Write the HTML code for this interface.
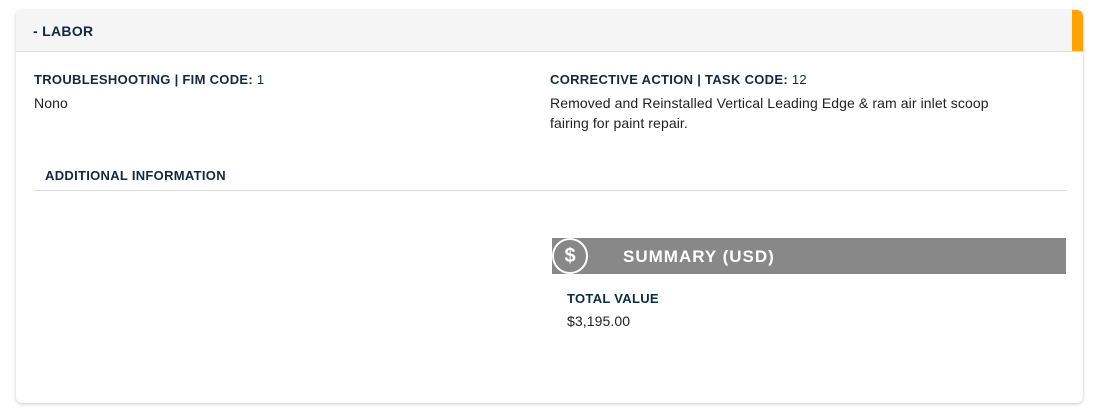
<!DOCTYPE html>
<html><head><style>
body{margin:0;background:#fff;font-family:"Liberation Sans",Arial,sans-serif;width:1094px;height:414px;position:relative;overflow:hidden}
.card{position:absolute;left:16px;top:10px;width:1067px;height:393px;background:#fff;border-radius:6px;box-shadow:0 1px 3px rgba(120,130,170,.45);overflow:hidden}
.hdr{position:absolute;left:0;top:0;width:1067px;height:41px;background:#f5f5f5;border-bottom:1px solid #ddd}
.hdr span{position:absolute;left:17px;top:13px;font-size:14px;font-weight:bold;color:#0e2a44;letter-spacing:.3px}
.orange{position:absolute;right:0;top:0;width:11px;height:41px;background:#ffa300}
.lbl{position:absolute;font-size:13px;font-weight:bold;color:#0e2a44;letter-spacing:.3px}
.lbl b{font-weight:normal}
.txt{position:absolute;font-size:14px;color:#222;line-height:20px;letter-spacing:.1px}
.line{position:absolute;left:18px;top:180px;width:1032px;height:1px;background:#ddd}
.bar{position:absolute;left:536px;top:228px;width:514px;height:36px;background:#888}
.circ{position:absolute;left:0;top:0;width:32px;height:32px;border-radius:50%;border:2px solid #fff;background:#888;color:#fff;font-weight:bold;font-size:20px;text-align:center;line-height:32px}
.bar .t{position:absolute;left:71px;top:9px;font-size:17px;font-weight:bold;color:#fff;letter-spacing:1px}
</style></head><body>
<div class="card">
<div class="hdr"><span>- LABOR</span></div>
<div class="orange"></div>
<div class="lbl" style="left:18px;top:62px">TROUBLESHOOTING | FIM CODE: <b>1</b></div>
<div class="txt" style="left:18px;top:83px">Nono</div>
<div class="lbl" style="left:534px;top:62px">CORRECTIVE ACTION | TASK CODE: <b>12</b></div>
<div class="txt" style="left:534px;top:83px;width:480px">Removed and Reinstalled Vertical Leading Edge &amp; ram air inlet scoop<br>fairing for paint repair.</div>
<div class="lbl" style="left:29px;top:158px">ADDITIONAL INFORMATION</div>
<div class="line"></div>
<div class="bar"><div class="circ">$</div><div class="t">SUMMARY (USD)</div></div>
<div class="lbl" style="left:551px;top:281px">TOTAL VALUE</div>
<div class="txt" style="left:551px;top:301px">$3,195.00</div>
</div>
</body></html>
